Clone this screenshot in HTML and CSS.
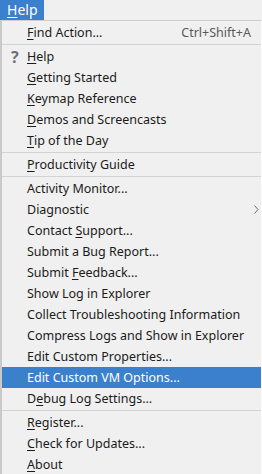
FILE: index.html
```html
<!DOCTYPE html>
<html lang="en">
<head>
  <meta charset="UTF-8">
  <title>Help Menu</title>
  <link rel="stylesheet" href="styles.css">
</head>
<body>

  <div class="menubar">
    <div class="menubar-item open"><u>H</u>elp</div>
  </div>

  <div class="menu">
    <div class="item"><span class="label"><u>F</u>ind Action...</span><span class="shortcut">Ctrl+Shift+A</span></div>
    <div class="sep"></div>
    <div class="item"><span class="icon">?</span><span class="label"><u>H</u>elp</span></div>
    <div class="item"><span class="label"><u>G</u>etting Started</span></div>
    <div class="item"><span class="label"><u>K</u>eymap Reference</span></div>
    <div class="item"><span class="label"><u>D</u>emos and Screencasts</span></div>
    <div class="item"><span class="label"><u>T</u>ip of the Day</span></div>
    <div class="sep"></div>
    <div class="item"><span class="label"><u>P</u>roductivity Guide</span></div>
    <div class="sep"></div>
    <div class="item"><span class="label">Activity Monitor...</span></div>
    <div class="item"><span class="label">Diagnostic</span>
      <svg class="arrow" width="5" height="9" viewBox="0 0 5 9"><path d="M0.5 0.5 L4 4.5 L0.5 8.5" fill="none" stroke="#6a6a6a" stroke-width="1"/></svg>
    </div>
    <div class="item"><span class="label">Contact <u>S</u>upport...</span></div>
    <div class="item"><span class="label">Submit a Bug Report...</span></div>
    <div class="item"><span class="label">Submit <u>F</u>eedback...</span></div>
    <div class="item"><span class="label">Show Log in Explorer</span></div>
    <div class="item"><span class="label">Collect Troubleshooting Information</span></div>
    <div class="item"><span class="label">Compress Logs and Show in Explorer</span></div>
    <div class="item"><span class="label">Edit Custom Properties...</span></div>
    <div class="item selected"><span class="label">Edit Custom VM Options...</span></div>
    <div class="item"><span class="label">D<u>e</u>bug Log Settings...</span></div>
    <div class="sep"></div>
    <div class="item"><span class="label"><u>R</u>egister...</span></div>
    <div class="item"><span class="label"><u>C</u>heck for Updates...</span></div>
    <div class="item"><span class="label"><u>A</u>bout</span></div>
  </div>

</body>
</html>
```

FILE: styles.css
```css
body {
  margin: 0;
  font-family: "Noto Sans", sans-serif;
  font-size: 12.5px;
  color: #1b1b1b;
  background-color: #f0f0f0;
  width: 262px;
  height: 474px;
  overflow: hidden;
}

u {
  text-decoration: underline;
  text-underline-offset: 2px;
}

.menubar {
  display: flex;
  height: 20px;
  background-color: #f0f0f0;
}

.menubar-item {
  padding: 0 6px 0 7px;
  line-height: 20px;
  font-size: 14px;
}

.menubar-item.open {
  background-color: #3a80cc;
  color: white;
}

.menu {
  border-top: 1px solid #cfcfcf;
  border-left: 2px solid #c9c9c9;
  border-right: 1px solid #fcfcfc;
  background-color: #f0f0f0;
  padding-top: 1px;
}

.item {
  position: relative;
  display: flex;
  align-items: center;
  height: 21px;
  padding-left: 25px;
  padding-right: 10px;
}

.item.selected {
  background-color: #3a80cc;
  color: white;
}

.label {
  flex: 1;
  white-space: nowrap;
}

.icon {
  position: absolute;
  left: 9px;
  font-size: 16px;
  font-weight: bold;
  color: #707070;
}

.shortcut {
  color: #5a5a5a;
}

.arrow {
  position: absolute;
  right: 2px;
}

.sep {
  height: 1px;
  margin: 1px 0 1px 0;
  background-color: #d3d3d3;
}
```
